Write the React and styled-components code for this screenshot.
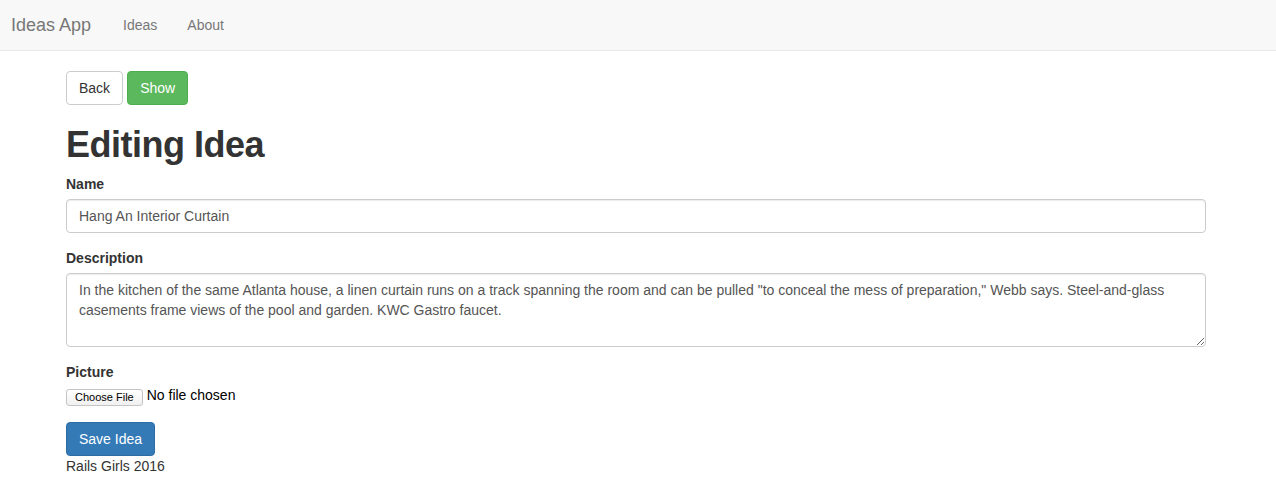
import React from "react";
import styled, { createGlobalStyle } from "styled-components";

const GlobalStyle = createGlobalStyle`
  * {
    box-sizing: border-box;
  }
  body {
    margin: 0;
    font-family: "Liberation Sans", Arial, sans-serif;
    font-size: 14px;
    line-height: 1.42857143;
    color: #333;
    background: #fff;
  }
`;

const Navbar = styled.nav`
  height: 51px;
  background-color: #f8f8f8;
  border-bottom: 1px solid #e7e7e7;
  display: flex;
  align-items: flex-start;
  margin-bottom: 20px;
`;

const Brand = styled.a`
  display: block;
  padding: 15px 17px 15px 11px;
  font-size: 18px;
  line-height: 20px;
  color: #777;
  text-decoration: none;
`;

const NavLink = styled.a`
  display: block;
  padding: 15px;
  line-height: 20px;
  color: #777;
  text-decoration: none;
`;

const Container = styled.div`
  width: 1170px;
  margin-left: 51px;
  padding: 0 15px;
`;

const ButtonRow = styled.div`
  display: flex;
  gap: 4px;
`;

const Button = styled.button`
  display: inline-block;
  padding: 6px 12px;
  font-family: inherit;
  font-size: 14px;
  line-height: 1.42857143;
  border-radius: 4px;
  border: 1px solid ${(p) => p.$border};
  background-color: ${(p) => p.$bg};
  color: ${(p) => p.$color};
  cursor: pointer;
`;

const Title = styled.h1`
  font-size: 36px;
  font-weight: bold;
  letter-spacing: -0.5px;
  line-height: 1.1;
  margin: 20px 0 9px;
  color: #333;
`;

const FormGroup = styled.div`
  margin-bottom: 15px;
`;

const Label = styled.label`
  display: block;
  font-weight: bold;
  margin-bottom: 5px;
`;

const fieldStyle = `
  display: block;
  width: 100%;
  padding: 6px 12px;
  font-family: "Liberation Sans", Arial, sans-serif;
  font-size: 14px;
  line-height: 1.42857143;
  color: #555;
  background-color: #fff;
  border: 1px solid #ccc;
  border-radius: 4px;
  box-shadow: inset 0 1px 1px rgba(0, 0, 0, 0.075);
  outline: none;
`;

const Input = styled.input`
  ${fieldStyle}
  height: 34px;
`;

const TextArea = styled.textarea`
  ${fieldStyle}
  height: 74px;
  resize: vertical;
`;

const FileRow = styled.div`
  display: flex;
  align-items: flex-start;
  height: 20px;
  gap: 4px;
`;

const FileButton = styled.span`
  display: inline-block;
  height: 17px;
  font-size: 11px;
  line-height: 15px;
  padding: 0 8px;
  border: 1px solid #c4c4c4;
  border-radius: 3px;
  background: linear-gradient(#fff, #f0f0f0);
  color: #000;
  margin-top: 2px;
`;

const FileText = styled.span`
  color: #000;
  font-size: 14px;
  line-height: 16px;
`;

const Footer = styled.div`
  line-height: 20px;
`;

export default function App() {
  return (
    <>
      <GlobalStyle />
      <Navbar>
        <Brand href="#">Ideas App</Brand>
        <NavLink href="#">Ideas</NavLink>
        <NavLink href="#">About</NavLink>
      </Navbar>
      <Container>
        <ButtonRow>
          <Button $bg="#fff" $border="#ccc" $color="#333">
            Back
          </Button>
          <Button $bg="#5cb85c" $border="#4cae4c" $color="#fff">
            Show
          </Button>
        </ButtonRow>
        <Title>Editing Idea</Title>
        <FormGroup>
          <Label>Name</Label>
          <Input type="text" defaultValue="Hang An Interior Curtain" />
        </FormGroup>
        <FormGroup>
          <Label>Description</Label>
          <TextArea
            defaultValue={
              'In the kitchen of the same Atlanta house, a linen curtain runs on a track spanning the room and can be pulled "to conceal the mess of preparation," Webb says. Steel-and-glass casements frame views of the pool and garden. KWC Gastro faucet.'
            }
          />
        </FormGroup>
        <FormGroup>
          <Label>Picture</Label>
          <FileRow>
            <FileButton>Choose File</FileButton>
            <FileText>No file chosen</FileText>
          </FileRow>
        </FormGroup>
        <Button $bg="#337ab7" $border="#2e6da4" $color="#fff">
          Save Idea
        </Button>
        <Footer>Rails Girls 2016</Footer>
      </Container>
    </>
  );
}
